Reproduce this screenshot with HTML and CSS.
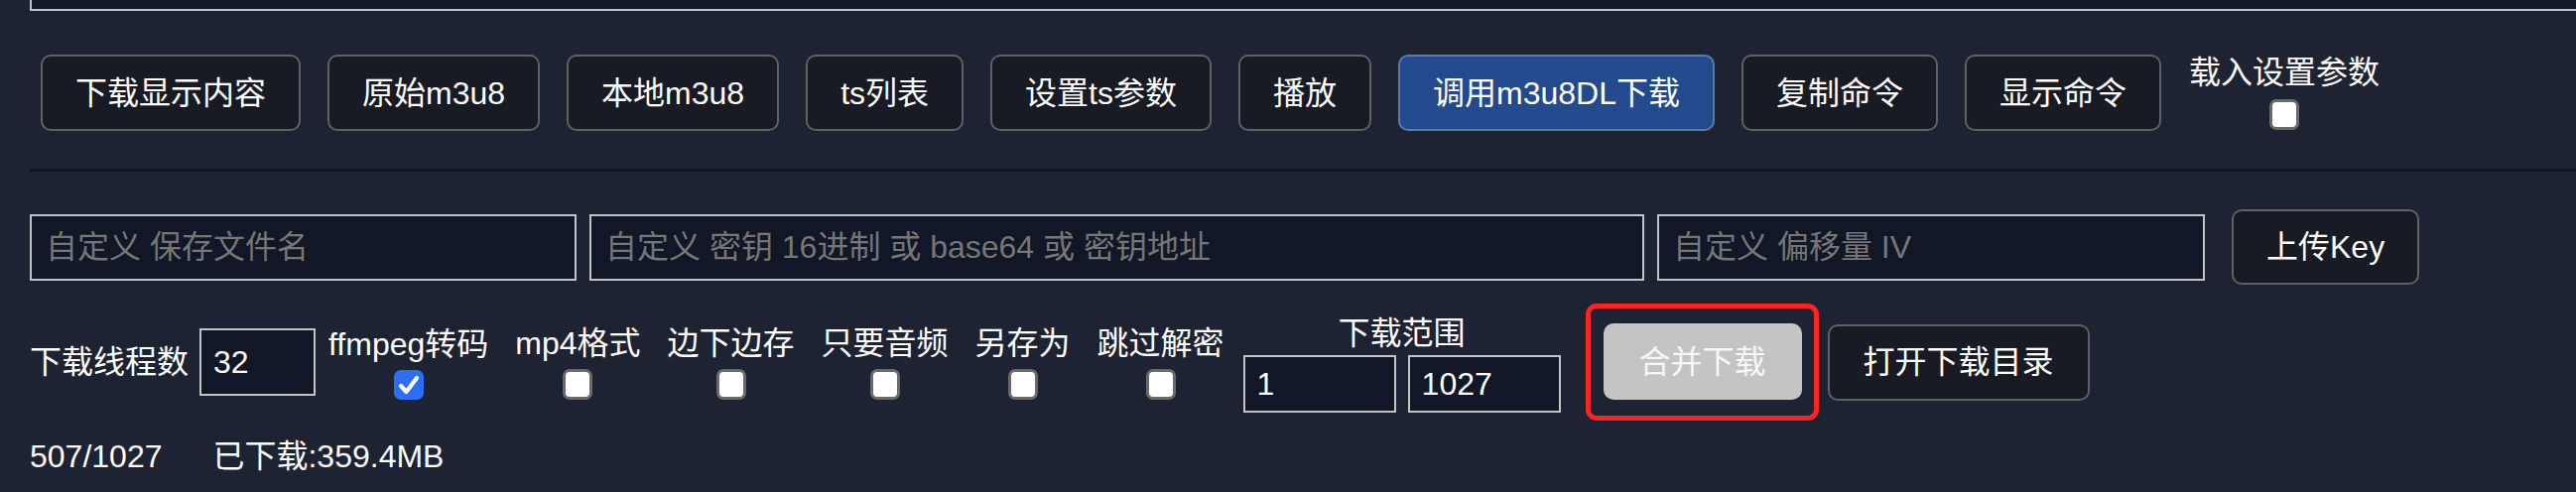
FILE: index.html
```html
<!DOCTYPE html>
<html lang="zh-CN">
<head>
<meta charset="utf-8">
<title>m3u8 下载</title>
<link rel="stylesheet" href="styles.css">
</head>
<body>
<div class="page">
  <div class="log"></div>

  <div class="toolbar">
    <button class="btn">下载显示内容</button>
    <button class="btn">原始m3u8</button>
    <button class="btn">本地m3u8</button>
    <button class="btn">ts列表</button>
    <button class="btn">设置ts参数</button>
    <button class="btn">播放</button>
    <button class="btn btn-primary">调用m3u8DL下载</button>
    <button class="btn">复制命令</button>
    <button class="btn">显示命令</button>
    <label class="check-col load-col">
      <span class="check-label">载入设置参数</span>
      <span class="cb"></span>
    </label>
  </div>

  <div class="divider"></div>

  <div class="key-row">
    <input class="field field-name" type="text" placeholder="自定义 保存文件名">
    <input class="field field-key" type="text" placeholder="自定义 密钥 16进制 或 base64 或 密钥地址">
    <input class="field field-iv" type="text" placeholder="自定义 偏移量 IV">
    <button class="btn btn-upload">上传Key</button>
  </div>

  <div class="opts-row">
    <span class="opt-label">下载线程数</span>
    <input class="field field-threads" type="text" value="32">
    <label class="check-col opt first"><span class="check-label">ffmpeg转码</span><span class="cb cb-on"><svg viewBox="0 0 30 30" width="30" height="30"><polyline points="7,16 12.5,22 23,8" fill="none" stroke="#fff" stroke-width="4.2" stroke-linecap="round" stroke-linejoin="round"/></svg></span></label>
    <label class="check-col opt"><span class="check-label">mp4格式</span><span class="cb"></span></label>
    <label class="check-col opt"><span class="check-label">边下边存</span><span class="cb"></span></label>
    <label class="check-col opt"><span class="check-label">只要音频</span><span class="cb"></span></label>
    <label class="check-col opt"><span class="check-label">另存为</span><span class="cb"></span></label>
    <label class="check-col opt"><span class="check-label">跳过解密</span><span class="cb"></span></label>
    <div class="range">
      <span class="check-label">下载范围</span>
      <div class="range-inputs">
        <input class="field field-range" type="text" value="1">
        <input class="field field-range" type="text" value="1027">
      </div>
    </div>
    <div class="highlight">
      <button class="btn btn-disabled">合并下载</button>
    </div>
    <button class="btn btn-open">打开下载目录</button>
  </div>

  <div class="status-row">
    <span>507/1027</span>
    <span class="downloaded">已下载:359.4MB</span>
  </div>
</div>
</body>
</html>
```

FILE: styles.css
```css
* {
  box-sizing: border-box;
}

html,
body {
  margin: 0;
  padding: 0;
}

body {
  width: 2596px;
  height: 496px;
  overflow: hidden;
  background: #1e2333;
  color: #ffffff;
  font-family: "Liberation Sans", "Noto Sans CJK SC", sans-serif;
  font-size: 32px;
  line-height: 38px;
}

.page {
  padding-left: 30px;
}

.log {
  width: 2566px;
  height: 11px;
  background: #111726;
  border: 2px solid #c4c4c4;
  border-top: none;
  border-right: none;
}

/* toolbar */
.toolbar {
  display: flex;
  align-items: flex-start;
  gap: 27px;
  margin-top: 44px;
  padding-left: 11px;
}

.btn {
  height: 77px;
  margin: 0;
  padding: 0 33px;
  border: 2px solid #5f6166;
  border-radius: 10px;
  background: #181b23;
  color: #ffffff;
  font: inherit;
  line-height: 38px;
  white-space: nowrap;
  display: flex;
  align-items: center;
}

.btn-primary {
  background: #224a8c;
  border-color: #5a7bb0;
}

.check-col {
  display: flex;
  flex-direction: column;
  align-items: center;
  white-space: nowrap;
}

.load-col {
  margin-top: -1px;
  margin-left: 1px;
}

.check-label {
  display: block;
}

.cb {
  display: block;
  width: 30px;
  height: 31px;
  margin-top: 8px;
  background: #ffffff;
  border: 3px solid #6a6a6a;
  border-radius: 7px;
}

.cb-on {
  background: #2a6ef6;
  border: none;
  height: 30px;
}

.cb-on svg {
  display: block;
}

.divider {
  height: 3px;
  background: #121620;
  margin-top: 38px;
}

/* key row */
.key-row {
  display: flex;
  align-items: center;
  margin-top: 38px;
  height: 76px;
}

.field {
  height: 67px;
  margin: 0;
  padding: 0 14px;
  border: 2px solid #c4c4c4;
  border-radius: 0;
  background: #111726;
  color: #ffffff;
  font: inherit;
  line-height: 38px;
  outline: none;
}

.field::placeholder {
  color: #767676;
  opacity: 1;
}

.field-name {
  width: 551px;
}

.field-key {
  width: 1063px;
  margin-left: 13px;
}

.field-iv {
  width: 552px;
  margin-left: 13px;
}

.btn-upload {
  height: 76px;
  margin-left: 27px;
  padding: 0 33px;
}

/* options row */
.opts-row {
  display: flex;
  align-items: center;
  margin-top: 19px;
  height: 118px;
}

.opt-label {
  white-space: nowrap;
}

.field-threads {
  width: 117px;
  height: 68px;
  margin-left: 11px;
  padding: 0 12px;
}

.opt {
  margin-left: 27px;
}

.opt.first {
  margin-left: 13px;
}

.opt .cb {
  margin-top: 7px;
}

.range {
  display: flex;
  flex-direction: column;
  align-items: center;
  margin-left: 19px;
  margin-top: 3px;
}

.range-inputs {
  display: flex;
  gap: 12px;
  margin-top: 3px;
}

.field-range {
  width: 154px;
  height: 58px;
  padding: 0 12px;
}

.highlight {
  margin-left: 25px;
  padding: 15px 12px 16px 13px;
  border: 5px solid #ff2320;
  border-radius: 11px;
}

.btn-disabled {
  width: 200px;
  justify-content: center;
  padding: 0;
  border: none;
  background: #c4c4c4;
  color: #f7f7f7;
}

.btn-open {
  margin-left: 9px;
  width: 264px;
  justify-content: center;
  padding: 0;
}

/* status */
.status-row {
  display: flex;
  margin-top: 17px;
}

.downloaded {
  margin-left: 51px;
}
```
